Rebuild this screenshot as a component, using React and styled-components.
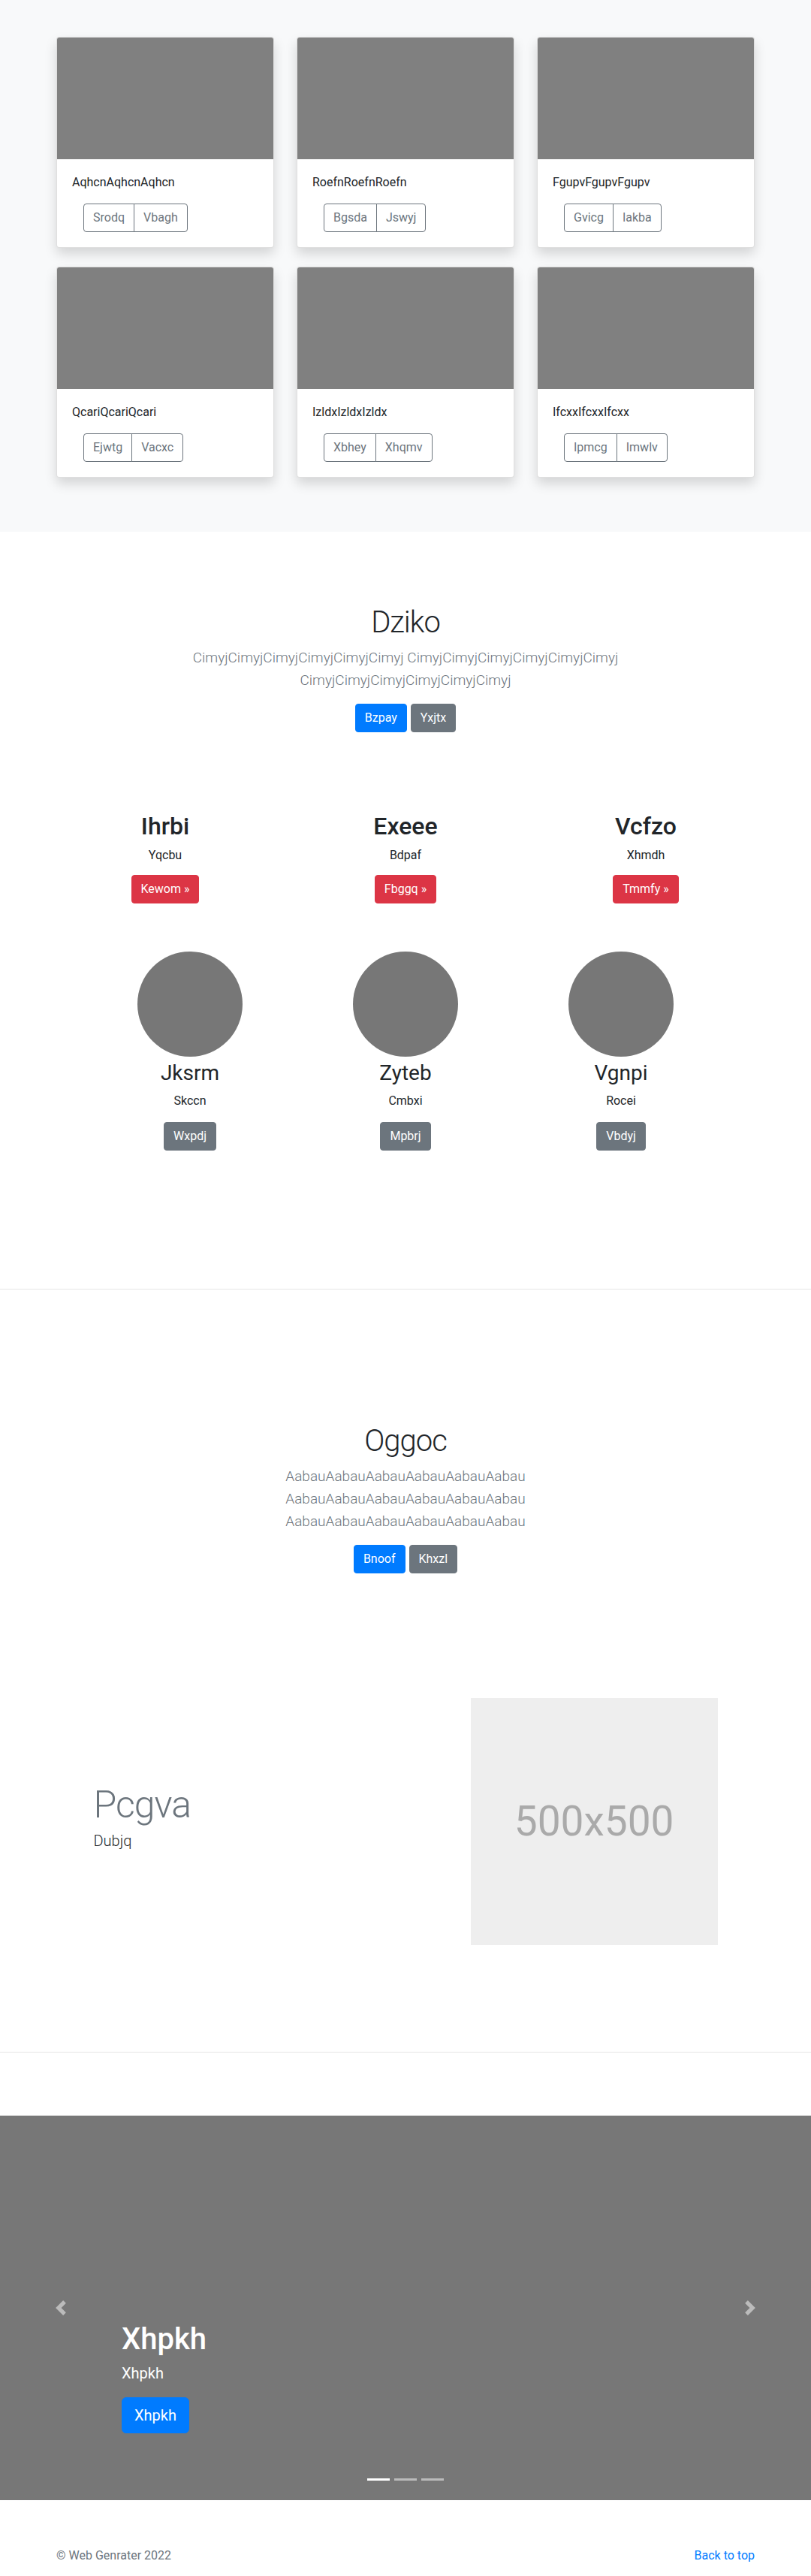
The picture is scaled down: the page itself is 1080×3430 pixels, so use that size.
import React from 'react';
import styled, { createGlobalStyle, css } from 'styled-components';

const GlobalStyle = createGlobalStyle`
  *, *::before, *::after { box-sizing: border-box; }
  html, body { margin: 0; padding: 0; }
  body {
    font-family: Roboto, "Noto Sans", "Liberation Sans", Arial, sans-serif;
    font-size: 16px;
    line-height: 1.5;
    color: #212529;
    background: #fff;
  }
  h1, h2, h3, p { margin: 0; }
`;

const AlbumSection = styled.section`
  background: #f8f9fa;
  padding: 49px 0 72px;
`;

const CardGrid = styled.div`
  width: 930px;
  margin: 0 auto;
  display: grid;
  grid-template-columns: repeat(3, 290px);
  column-gap: 30px;
  row-gap: 25px;
`;

const Card = styled.div`
  background: #fff;
  border: 1px solid rgba(0, 0, 0, 0.125);
  border-radius: 4px;
  overflow: hidden;
  box-shadow: 0 8px 16px rgba(0, 0, 0, 0.15);
`;

const Thumb = styled.div`
  height: 162px;
  background: #808080;
`;

const CardBody = styled.div`
  padding: 19px 20px 20px;
`;

const CardText = styled.p`
  font-size: 16px;
  line-height: 24px;
  margin-bottom: 16px;
`;

const BtnGroup = styled.div`
  display: inline-flex;
  margin-left: 15px;
`;

const OutlineBtn = styled.a`
  display: inline-block;
  font-size: 16px;
  line-height: 24px;
  padding: 6px 12px;
  color: #6c757d;
  border: 1px solid #6c757d;
  text-decoration: none;
  &:first-child {
    border-radius: 4px 0 0 4px;
  }
  &:last-child {
    border-radius: 0 4px 4px 0;
    margin-left: -1px;
  }
`;

const Btn = styled.a`
  display: inline-block;
  font-size: 16px;
  line-height: 24px;
  padding: 6px 12px;
  color: #fff;
  text-decoration: none;
  border-radius: 4px;
  background: ${(p) => p.$bg};
  border: 1px solid ${(p) => p.$bg};
  ${(p) =>
    p.$lg &&
    css`
      font-size: 20px;
      line-height: 30px;
      padding: 8px 16px;
      border-radius: 6px;
    `}
`;

const Section = styled.section`
  padding: ${(p) => p.$pad};
`;

const Hero = styled.div`
  max-width: 610px;
  margin: 0 auto;
  text-align: center;
`;

const HeroTitle = styled.h1`
  font-size: 40px;
  font-weight: 300;
  line-height: 48px;
  letter-spacing: -1px;
  margin-bottom: 8px;
`;

const Lead = styled.p`
  font-size: 19px;
  font-weight: 300;
  line-height: 30px;
  color: #6c757d;
  margin-bottom: 16px;
`;

const ButtonRow = styled.div`
  display: flex;
  justify-content: center;
  gap: 5px;
  margin-top: ${(p) => p.$mt || 0}px;
`;

const ColumnsRow = styled.div`
  width: ${(p) => p.$w}px;
  margin: ${(p) => p.$mt}px auto 0;
  display: grid;
  grid-template-columns: repeat(3, 1fr);
  text-align: center;
`;

const Column = styled.div`
  display: flex;
  flex-direction: column;
  align-items: center;
`;

const ColHeading = styled.h2`
  font-size: 32px;
  font-weight: 500;
  line-height: 38px;
  margin-bottom: 8px;
`;

const ColText = styled.p`
  font-size: 16px;
  line-height: 24px;
  margin-bottom: ${(p) => p.$mb}px;
`;

const Circle = styled.div`
  width: 140px;
  height: 140px;
  border-radius: 50%;
  background: #777;
  margin-bottom: 5px;
`;

const CircleHeading = styled.h3`
  font-size: 28px;
  font-weight: 400;
  line-height: 34px;
  margin-bottom: 8px;
`;

const Rule = styled.hr`
  margin: 0;
  border: 0;
  border-top: 1px solid rgba(0, 0, 0, 0.1);
`;

const Featurette = styled.div`
  width: 861px;
  margin: 166px auto 0;
  display: grid;
  grid-template-columns: 7fr 5fr;
  align-items: center;
`;

const FeatText = styled.div`
  padding: 0 15px 7px;
`;

const FeatHeading = styled.h2`
  font-size: 50px;
  font-weight: 300;
  line-height: 50px;
  letter-spacing: -1px;
  color: #6c757d;
  margin-bottom: 8px;
`;

const FeatLead = styled.p`
  font-size: 20px;
  font-weight: 300;
  line-height: 30px;
`;

const FeatImageWrap = styled.div`
  padding: 0 15px;
`;

const Placeholder = styled.div`
  width: 100%;
  aspect-ratio: 1 / 1;
  background: #eee;
  color: #aaa;
  font-size: 55px;
  display: flex;
  align-items: center;
  justify-content: center;
`;

const Carousel = styled.div`
  position: relative;
  height: 512px;
  margin-top: 84px;
  background: #777;
  overflow: hidden;
`;

const Caption = styled.div`
  position: absolute;
  left: 162px;
  right: 162px;
  bottom: 89px;
  color: #fff;
`;

const CaptionTitle = styled.h1`
  font-size: 40px;
  font-weight: 500;
  line-height: 48px;
  margin-bottom: 6px;
`;

const CaptionText = styled.p`
  font-size: 20px;
  line-height: 30px;
  margin-bottom: 17px;
`;

const Control = styled.a`
  position: absolute;
  top: 0;
  bottom: 0;
  ${(p) => (p.$side === 'left' ? 'left: 0;' : 'right: 0;')}
  width: 162px;
  display: flex;
  align-items: center;
  justify-content: center;
  opacity: 0.5;
`;

const Indicators = styled.ol`
  position: absolute;
  left: 0;
  right: 0;
  bottom: 26px;
  margin: 0;
  padding: 0;
  list-style: none;
  display: flex;
  justify-content: center;
  gap: 6px;
`;

const Indicator = styled.li`
  width: 30px;
  height: 3px;
  background: #fff;
  opacity: ${(p) => (p.$active ? 1 : 0.5)};
`;

const Footer = styled.footer`
  width: 930px;
  margin: 0 auto;
  padding: 62px 0 3px;
  display: flex;
  justify-content: space-between;
  color: #6c757d;
  font-size: 16px;
  line-height: 24px;
`;

const FooterLink = styled.a`
  color: #007bff;
  text-decoration: none;
`;

const cards = [
  { title: 'AqhcnAqhcnAqhcn', a: 'Srodq', b: 'Vbagh' },
  { title: 'RoefnRoefnRoefn', a: 'Bgsda', b: 'Jswyj' },
  { title: 'FgupvFgupvFgupv', a: 'Gvicg', b: 'Iakba' },
  { title: 'QcariQcariQcari', a: 'Ejwtg', b: 'Vacxc' },
  { title: 'IzldxIzldxIzldx', a: 'Xbhey', b: 'Xhqmv' },
  { title: 'IfcxxIfcxxIfcxx', a: 'Ipmcg', b: 'Imwlv' },
];

const features = [
  { h: 'Ihrbi', t: 'Yqcbu', b: 'Kewom »' },
  { h: 'Exeee', t: 'Bdpaf', b: 'Fbggq »' },
  { h: 'Vcfzo', t: 'Xhmdh', b: 'Tmmfy »' },
];

const people = [
  { h: 'Jksrm', t: 'Skccn', b: 'Wxpdj' },
  { h: 'Zyteb', t: 'Cmbxi', b: 'Mpbrj' },
  { h: 'Vgnpi', t: 'Rocei', b: 'Vbdyj' },
];

const Chevron = ({ dir }) => (
  <svg width="20" height="20" viewBox="0 0 8 8" fill="#fff">
    {dir === 'left' ? (
      <path d="M5.25 0l-4 4 4 4 1.5-1.5L4.25 4l2.5-2.5L5.25 0z" />
    ) : (
      <path d="M2.75 0l-1.5 1.5L3.75 4l-2.5 2.5L2.75 8l4-4-4-4z" />
    )}
  </svg>
);

const cimyj = 'CimyjCimyjCimyjCimyjCimyjCimyj';
const aabau = 'AabauAabauAabauAabauAabauAabau';

export default function App() {
  return (
    <>
      <GlobalStyle />
      <AlbumSection>
        <CardGrid>
          {cards.map((c) => (
            <Card key={c.title}>
              <Thumb />
              <CardBody>
                <CardText>{c.title}</CardText>
                <BtnGroup>
                  <OutlineBtn href="#">{c.a}</OutlineBtn>
                  <OutlineBtn href="#">{c.b}</OutlineBtn>
                </BtnGroup>
              </CardBody>
            </Card>
          ))}
        </CardGrid>
      </AlbumSection>

      <Section $pad="97px 0 184px">
        <Hero>
          <HeroTitle>Dziko</HeroTitle>
          <Lead>{`${cimyj} ${cimyj} ${cimyj}`}</Lead>
          <ButtonRow $mt={7}>
            <Btn href="#" $bg="#007bff">Bzpay</Btn>
            <Btn href="#" $bg="#6c757d">Yxjtx</Btn>
          </ButtonRow>
        </Hero>

        <ColumnsRow $w={960} $mt={106}>
          {features.map((f) => (
            <Column key={f.h}>
              <ColHeading>{f.h}</ColHeading>
              <ColText $mb={14}>{f.t}</ColText>
              <Btn href="#" $bg="#dc3545">{f.b}</Btn>
            </Column>
          ))}
        </ColumnsRow>

        <ColumnsRow $w={861} $mt={64}>
          {people.map((p) => (
            <Column key={p.h}>
              <Circle />
              <CircleHeading>{p.h}</CircleHeading>
              <ColText $mb={16}>{p.t}</ColText>
              <Btn href="#" $bg="#6c757d">{p.b}</Btn>
            </Column>
          ))}
        </ColumnsRow>
      </Section>

      <Rule />

      <Section $pad="178px 0 142px">
        <Hero>
          <HeroTitle>Oggoc</HeroTitle>
          <Lead>{`${aabau} ${aabau} ${aabau}`}</Lead>
          <ButtonRow $mt={6}>
            <Btn href="#" $bg="#007bff">Bnoof</Btn>
            <Btn href="#" $bg="#6c757d">Khxzl</Btn>
          </ButtonRow>
        </Hero>

        <Featurette>
          <FeatText>
            <FeatHeading>Pcgva</FeatHeading>
            <FeatLead>Dubjq</FeatLead>
          </FeatText>
          <FeatImageWrap>
            <Placeholder>500x500</Placeholder>
          </FeatImageWrap>
        </Featurette>
      </Section>

      <Rule />

      <Carousel>
        <Indicators>
          <Indicator $active />
          <Indicator />
          <Indicator />
        </Indicators>
        <Caption>
          <CaptionTitle>Xhpkh</CaptionTitle>
          <CaptionText>Xhpkh</CaptionText>
          <Btn href="#" $bg="#007bff" $lg>Xhpkh</Btn>
        </Caption>
        <Control href="#" $side="left" aria-label="Previous">
          <Chevron dir="left" />
        </Control>
        <Control href="#" $side="right" aria-label="Next">
          <Chevron dir="right" />
        </Control>
      </Carousel>

      <Footer>
        <span>© Web Genrater 2022</span>
        <FooterLink href="#">Back to top</FooterLink>
      </Footer>
    </>
  );
}
